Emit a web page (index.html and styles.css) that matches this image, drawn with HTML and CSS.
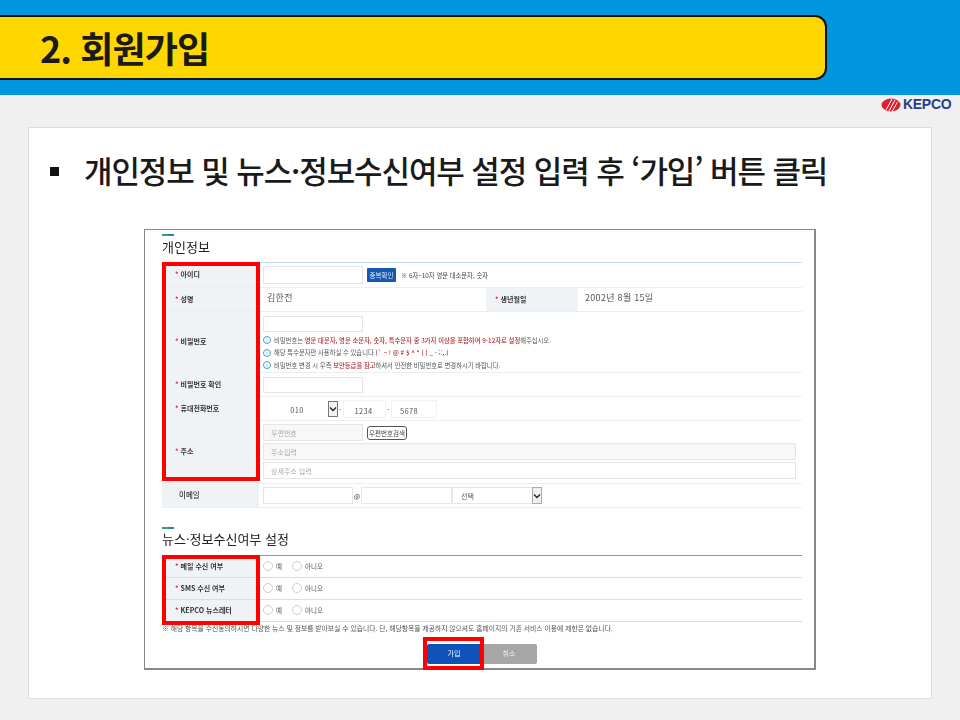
FILE: index.html
```html
<!DOCTYPE html>
<html lang="ko">
<head>
<meta charset="utf-8">
<title>회원가입</title>
<link rel="stylesheet" href="styles.css">
</head>
<body>
<header class="topbar">
  <h1 class="banner">2. 회원가입</h1>
</header>
<div class="logo">
  <svg class="logo-mark" width="20" height="14" viewBox="0 0 20 14">
    <ellipse cx="10" cy="7" rx="9.5" ry="6.5" fill="#dc2030"/>
    <path d="M5 12 11 1M8 13 14 2M11 13.5 16.500 4" stroke="#fff" stroke-width="1" fill="none"/>
  </svg>
  <span class="logo-text">KEPCO</span>
</div>
<main class="card">
  <h2 class="lead"><span class="bullet"></span>개인정보 및 뉴스·정보수신여부 설정 입력 후 ‘가입’ 버튼 클릭</h2>
  <section class="shot">
    <div class="shot-inner">
      <div class="accent"></div>
      <h3 class="sec-title">개인정보</h3>
      <div class="table first">
        <div class="row r-id">
          <div class="lab"><i>*</i> 아이디</div>
          <div class="val"><div class="inp w100 h18"></div><span class="btn-blue">중복확인</span><span class="tiny hint-id">※ 6자~10자 영문 대소문자, 숫자</span></div>
        </div>
        <div class="row r-name">
          <div class="lab"><i>*</i> 성명</div>
          <div class="val name"><span class="plain">김한전</span></div>
          <div class="lab lab2"><i>*</i> 생년월일</div>
          <div class="val birth"><span class="plain">2002년 8월 15일</span></div>
        </div>
        <div class="row r-pw">
          <div class="lab"><i>*</i> 비밀번호</div>
          <div class="val stack">
            <div class="inp w100 h16"></div>
            <ul class="hints">
              <li><span class="info">i</span><span>비밀번호는 <b>영문 대문자, 영문 소문자, 숫자, 특수문자 중 3가지 이상을 포함하여 9-12자로 설정</b>해주십시오.</span></li>
              <li><span class="info">i</span><span>해당 특수문자만 사용하실 수 있습니다.<b>(` ~ ! @ # $ ^ * ( ) _ - ;:,.)</b></span></li>
              <li><span class="info">i</span><span>비밀번호 변경 시 우측 <b>보안등급을 참고</b>하셔서 안전한 비밀번호로 변경하시기 바랍니다.</span></li>
            </ul>
          </div>
        </div>
        <div class="row r-confirm">
          <div class="lab"><i>*</i> 비밀번호 확인</div>
          <div class="val"><div class="inp w100 h16"></div></div>
        </div>
        <div class="row r-phone">
          <div class="lab"><i>*</i> 휴대전화번호</div>
          <div class="val phone">
            <span class="num n1">010</span>
            <span class="arrow"><svg width="8" height="6" viewBox="0 0 8 6"><path d="M1 1.500 4 4.500 7 1.500" fill="none" stroke="#222" stroke-width="1.300"/></svg></span>
            <span class="dash">-</span>
            <span class="num n2">1234</span>
            <span class="dash d2">-</span>
            <span class="num n3">5678</span>
          </div>
        </div>
        <div class="row r-addr">
          <div class="lab"><i>*</i> 주소</div>
          <div class="val stack addr">
            <div class="zip"><div class="inp w100 h17 grey">우편번호</div><span class="btn-line">우편번호검색</span></div>
            <div class="inp full h17 grey">주소입력</div>
            <div class="inp full h17">상세주소 입력</div>
          </div>
        </div>
        <div class="row r-mail">
          <div class="lab plainlab">이메일</div>
          <div class="val mail">
            <div class="inp w90 h17"></div>
            <span class="at">@</span>
            <div class="inp w91 h17"></div>
            <div class="inp sel h17">선택<span class="arrow small"><svg width="8" height="6" viewBox="0 0 8 6"><path d="M1 1.500 4 4.500 7 1.500" fill="none" stroke="#222" stroke-width="1.300"/></svg></span></div>
          </div>
        </div>
      </div>
      <div class="accent second"></div>
      <h3 class="sec-title second-title">뉴스·정보수신여부 설정</h3>
      <div class="table grey-top">
        <div class="row r-radio">
          <div class="lab"><i>*</i> 메일 수신 여부</div>
          <div class="val radios"><span class="radio"></span><span class="rtxt yes">예</span><span class="radio"></span><span class="rtxt">아니오</span></div>
        </div>
        <div class="row r-radio">
          <div class="lab"><i>*</i> SMS 수신 여부</div>
          <div class="val radios"><span class="radio"></span><span class="rtxt yes">예</span><span class="radio"></span><span class="rtxt">아니오</span></div>
        </div>
        <div class="row r-radio">
          <div class="lab"><i>*</i> KEPCO 뉴스레터</div>
          <div class="val radios"><span class="radio"></span><span class="rtxt yes">예</span><span class="radio"></span><span class="rtxt">아니오</span></div>
        </div>
      </div>
      <p class="note">※ 해당 항목을 수신동의하시면 다양한 뉴스 및 정보를 받아보실 수 있습니다. 단, 해당항목을 제공하지 않으셔도 홈페이지의 기존 서비스 이용에 제한은 없습니다.</p>
      <div class="actions"><span class="act ok">가입</span><span class="act no">취소</span></div>
    </div>
    <div class="mark m1"></div>
    <div class="mark m2"></div>
    <div class="mark m3"></div>
  </section>
</main>
</body>
</html>
```

FILE: styles.css
```css
* { box-sizing: border-box; }
html, body { margin: 0; padding: 0; }
body {
  width: 960px;
  height: 720px;
  overflow: hidden;
  position: relative;
  background: #f0f0f0;
  font-family: "Noto Sans CJK KR", "Noto Sans", sans-serif;
  color: #222;
}
.topbar {
  height: 95px;
  padding-top: 15px;
  background: #0096de;
}
.banner {
  width: 827px;
  height: 65px;
  margin: 0;
  padding-left: 40px;
  background: #ffd700;
  border: 2px solid #111;
  border-left: 0;
  border-radius: 0 12px 12px 0;
  font-size: 36px;
  font-weight: 700;
  line-height: 60px;
  letter-spacing: -.9px;
  color: #1a1a1a;
}
.logo {
  position: absolute;
  left: 881px;
  top: 97px;
  display: flex;
  align-items: center;
  gap: 2px;
}
.logo-text {
  font-family: "Liberation Sans", sans-serif;
  font-weight: 700;
  font-size: 14px;
  line-height: 15px;
  letter-spacing: -.3px;
  color: #1f3f8f;
}
.card {
  width: 904px;
  height: 572px;
  margin: 32px 0 0 28px;
  background: #fff;
  border: 1px solid #dcdcdc;
}
.lead {
  display: flex;
  align-items: flex-start;
  margin: 0;
  padding: 20px 0 0 21px;
  height: 101px;
  font-size: 31px;
  font-weight: 500;
  line-height: 44px;
  letter-spacing: -1.100px;
  color: #1a1a1a;
}
.bullet {
  width: 9px;
  height: 9px;
  margin: 19px 25px 0 0;
  background: #111;
  flex: none;
}
.shot {
  position: relative;
  width: 672px;
  height: 441px;
  margin-left: 115px;
  border: 1px solid #888;
  border-width: 1px 2px 2px 1px;
  background: #fff;
}
.shot-inner {
  padding: 4px 0 0 17px;
  filter: blur(.4px);
}
.accent {
  width: 12px;
  height: 2px;
  background: linear-gradient(90deg, #3aa35a 50%, #2a7fc0 50%);
}
.accent.second { margin-top: 19px; }
.sec-title {
  margin: 0;
  height: 26px;
  font-size: 13px;
  font-weight: 400;
  line-height: 22px;
  color: #222;
}
.second-title { line-height: 20px; }
.table { width: 640px; border-top: 1px solid #c5dbe6; }
.table.grey-top { border-top-color: #8a9aa0; }
.row {
  display: flex;
  border-bottom: 1px solid #eceef0;
}
.r-id { height: 25px; }
.r-name { height: 24px; }
.r-pw { height: 61px; }
.r-confirm { height: 24px; }
.r-phone { height: 24px; }
.r-addr { height: 63px; }
.r-mail { height: 24px; }
.r-radio { height: 22px; border-bottom-color: #ddd; }
.lab {
  flex: none;
  width: 97px;
  padding: 0 0 2px 13px;
  display: flex;
  align-items: center;
  gap: 2px;
  background: #f0f3f6;
  font-size: 7px;
  font-weight: 700;
  color: #333;
}
.lab i { color: #d33; font-style: normal; }
.plainlab { font-weight: 500; padding-left: 17px; font-size: 7.500px; }
.lab2 { width: 92px; padding-left: 9px; }
.val {
  flex: 1;
  display: flex;
  align-items: center;
  padding-left: 4px;
  font-size: 7px;
  color: #444;
}
.val.name { flex: none; width: 227px; padding-left: 8px; }
.val.birth { padding-left: 7px; }
.plain { font-size: 9px; color: #555; margin-top: -4px; letter-spacing: .3px; }
.stack { flex-direction: column; align-items: flex-start; }
.r-pw .stack { padding-top: 4px; }
.inp {
  border: 1px solid #e6e6e6;
  background: #fff;
  padding-left: 7px;
  display: flex;
  align-items: center;
  font-size: 7px;
  color: #aaa;
  flex: none;
}
.w100 { width: 100px; }
.w90 { width: 90px; }
.w91 { width: 91px; }
.h18 { height: 18px; }
.h17 { height: 17px; }
.h16 { height: 16px; }
.grey { background: #f8f8f8; }
.full { width: 533px; }
.btn-blue {
  width: 29px;
  height: 14px;
  margin-left: 4px;
  background: #1658b0;
  border-radius: 1px;
  color: #dfe9f5;
  font-size: 6.500px;
  line-height: 14px;
  text-align: center;
  flex: none;
}
.tiny { font-size: 6.300px; color: #444; }
.hint-id { margin-left: 5px; }
.hints {
  list-style: none;
  margin: 2px 0 0;
  padding: 0;
}
.hints li {
  display: flex;
  align-items: center;
  gap: 3px;
  height: 12.500px;
  font-size: 6.300px;
  color: #555;
  white-space: nowrap;
}
.hints b { font-weight: 500; color: #b3282d; }
.info {
  width: 8px;
  height: 8px;
  border: 1px solid #4a9ed0;
  border-radius: 50%;
  font-size: 5px;
  line-height: 6px;
  text-align: center;
  color: #4a9ed0;
  flex: none;
}
.phone { gap: 0; }
.num {
  display: block;
  height: 18px;
  line-height: 20px;
  text-align: center;
  font-size: 7.500px;
  color: #555;
  letter-spacing: .3px;
  border: 1px solid #f2f2f2;
  flex: none;
}
.n1 { width: 65px; border: 0; padding-left: 3px; }
.n2 { width: 43px; padding-right: 2px; }
.n3 { width: 46px; padding-right: 10px; }
.arrow {
  flex: none;
  width: 10px;
  height: 16px;
  display: flex;
  align-items: center;
  justify-content: center;
  background: #f0f0f0;
  border: 1px solid #777;
}
.arrow.small { margin-left: auto; margin-right: -1px; border-color: #aaa; height: 17px; }
.dash { width: 5px; text-align: center; flex: none; color: #555; }
.d2 { width: 5px; }
.addr { gap: 2px; padding-top: 3px; align-items: flex-start; }
.zip { display: flex; align-items: center; gap: 4px; }
.btn-line {
  width: 40px;
  height: 14px;
  border: 1px solid #555;
  border-radius: 3px;
  font-size: 6.500px;
  line-height: 12px;
  text-align: center;
  color: #444;
  background: #fff;
}
.mail { gap: 0; }
.at { width: 8px; text-align: center; font-size: 7px; }
.sel { width: 90px; padding-left: 8px; color: #555; }
.radios { gap: 0; padding-bottom: 1px; }
.radio {
  width: 10px;
  height: 10px;
  border: 1px solid #ccc;
  border-radius: 50%;
  flex: none;
}
.rtxt { font-size: 6.500px; margin-left: 3px; color: #555; }
.rtxt.yes { width: 16px; }
.note {
  margin: 1px 0 0;
  font-size: 6.800px;
  line-height: 10px;
  color: #555;
  white-space: nowrap;
}
.actions {
  display: flex;
  justify-content: center;
  width: 640px;
  margin: 11px 0 0;
}
.act {
  width: 54px;
  height: 20px;
  font-size: 7px;
  line-height: 19px;
  text-align: center;
  color: #fff;
}
.ok { background: #0f52ba; border-radius: 2px 0 0 2px; }
.no { width: 56px; background: #a6a6a6; border-radius: 0 2px 2px 0; color: #eee; }
.mark {
  position: absolute;
  border: 4px solid #f00;
}
.m1 { left: 17px; top: 32px; width: 98px; height: 219px; }
.m2 { left: 17px; top: 325px; width: 98px; height: 70px; }
.m3 { left: 278px; top: 407px; width: 61px; height: 33px; }
```
